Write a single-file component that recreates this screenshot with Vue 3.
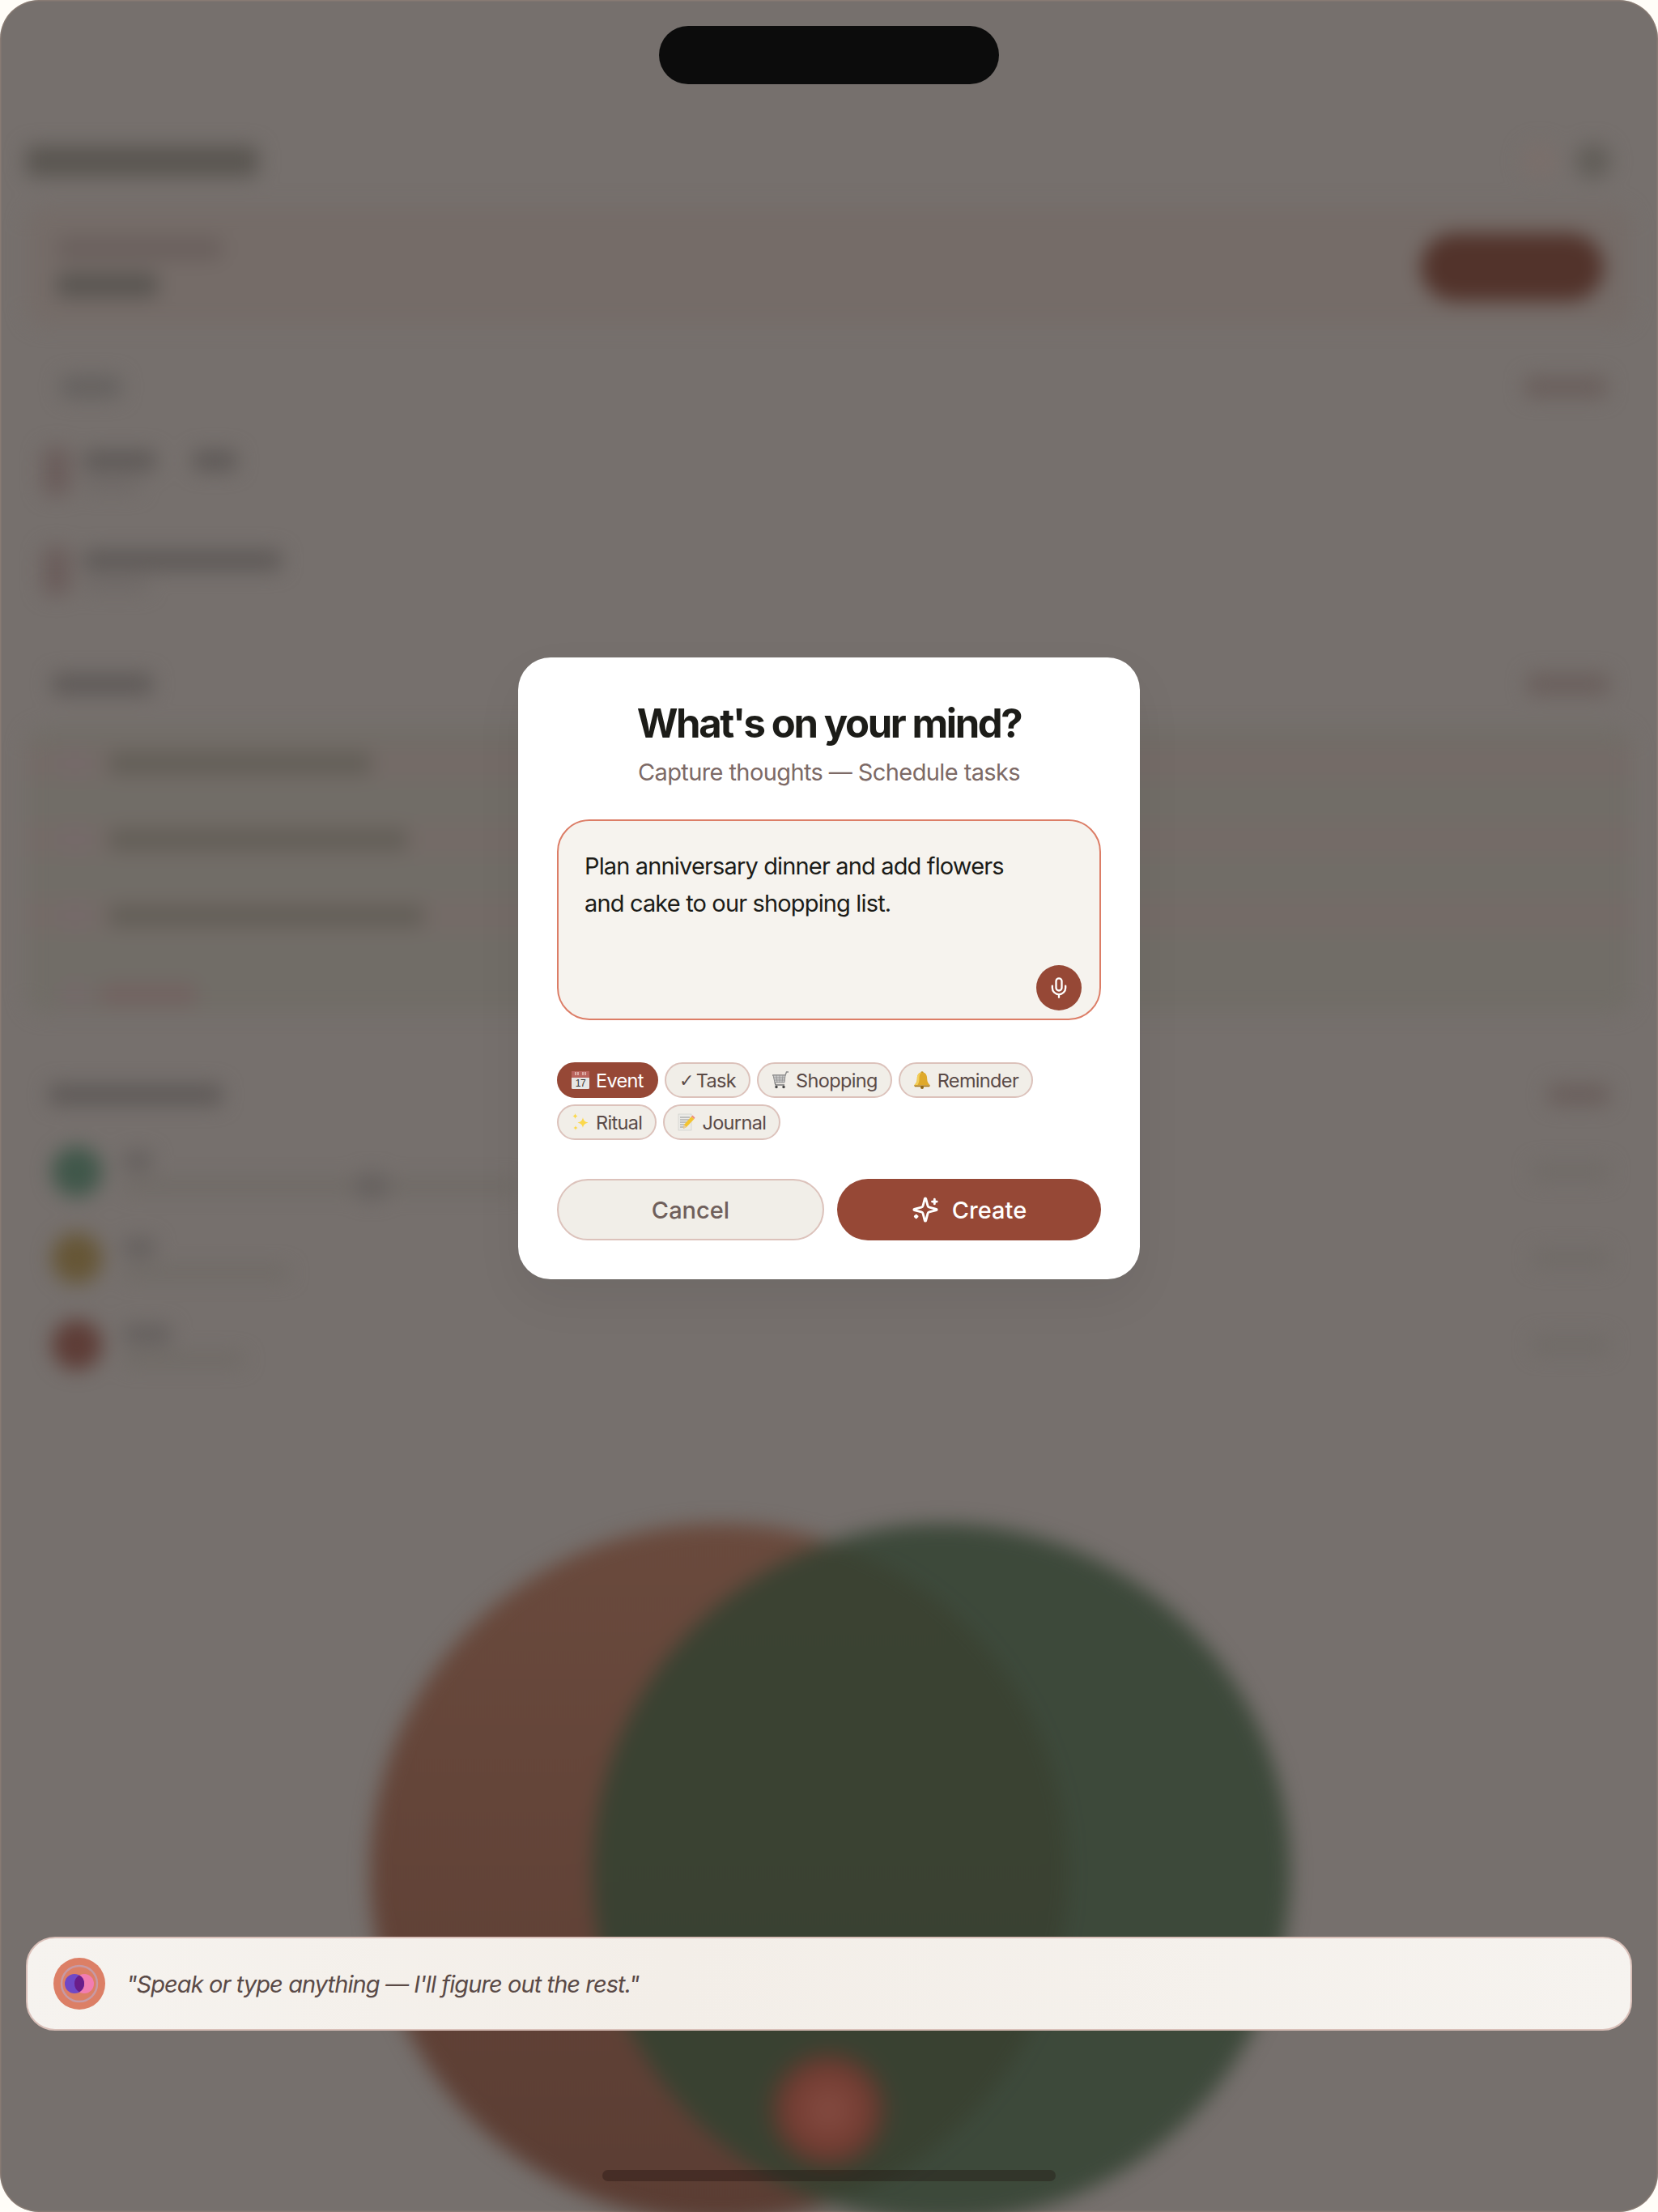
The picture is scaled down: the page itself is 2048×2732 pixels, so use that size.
<script setup>
const todayRows = [
  { title: 90, extra: 55, sub: 70 },
  { title: 245, extra: 0, sub: 80 }
]
const taskRows = [325, 370, 390]
const people = [
  { tone: 'green', name: 36, sub: 490, value: 95, knob: true },
  { tone: 'amber', name: 40, sub: 205, value: 95 },
  { tone: 'red', name: 60, sub: 150, value: 95 }
]
const chips = [
  { label: 'Event', icon: 'calendar', active: true },
  { label: 'Task', check: true },
  { label: 'Shopping', icon: 'cart' },
  { label: 'Reminder', icon: 'bell' },
  { label: 'Ritual', icon: 'sparkle' },
  { label: 'Journal', icon: 'memo' }
]
</script>

<template>
  <div class="frame">
    <div class="backdrop" aria-hidden="true">
      <div class="orb orb-orange"></div>
      <div class="orb orb-green"></div>
      <div class="orb orb-red"></div>

      <div class="app">
        <div class="head">
          <div class="bar bar-title"></div>
          <div class="head-icons">
            <span class="dot dot-faint"></span>
            <span class="dot"></span>
          </div>
        </div>

        <div class="hero">
          <div class="hero-text">
            <div class="bar bar-hero-label"></div>
            <div class="bar bar-hero-value"></div>
          </div>
          <div class="hero-pill"></div>
        </div>

        <div class="section-head today-head">
          <div class="bar bar-today"></div>
          <div class="bar bar-link bar-link-wide"></div>
        </div>
        <div class="today-list">
          <div v-for="(row, i) in todayRows" :key="i" class="today-row">
            <div class="marker"></div>
            <div class="today-text">
              <div class="today-title">
                <div class="bar bar-mid" :style="{ width: row.title + 'px' }"></div>
                <div v-if="row.extra" class="bar bar-mid" :style="{ width: row.extra + 'px' }"></div>
              </div>
              <div class="bar bar-faint" :style="{ width: row.sub + 'px' }"></div>
            </div>
          </div>
        </div>

        <div class="section-head tasks-head">
          <div class="bar bar-mid bar-heading-a"></div>
          <div class="bar bar-link bar-link-wide"></div>
        </div>
        <div class="tasks">
          <div v-for="(w, i) in taskRows" :key="i" class="task-row">
            <span class="task-check"></span>
            <div class="bar bar-task" :style="{ width: w + 'px' }"></div>
          </div>
          <div class="task-add">
            <span class="task-check"></span>
            <div class="bar bar-add"></div>
          </div>
        </div>

        <div class="section-head people-head">
          <div class="bar bar-mid bar-heading-b"></div>
          <div class="bar bar-link"></div>
        </div>
        <div class="people">
          <div v-for="(p, i) in people" :key="i" class="person">
            <span class="avatar" :class="p.tone"></span>
            <div class="person-text">
              <div class="bar bar-name" :style="{ width: p.name + 'px' }"></div>
              <div class="bar bar-sub" :style="{ width: p.sub + 'px' }">
                <span v-if="p.knob" class="knob"></span>
              </div>
            </div>
            <div class="bar bar-value" :style="{ width: p.value + 'px' }"></div>
          </div>
        </div>
      </div>
    </div>

    <div class="island"></div>

    <section class="modal">
      <h1 class="title">What's on your mind?</h1>
      <p class="subtitle">Capture thoughts — Schedule tasks</p>

      <div class="input">
        <p class="input-text">Plan anniversary dinner and add flowers<br>and cake to our shopping list.</p>
        <span class="mic">
          <svg viewBox="0 0 24 24" width="28" height="28" fill="none" stroke="#fff" stroke-width="2" stroke-linecap="round" stroke-linejoin="round">
            <path d="M12 2a3 3 0 0 0-3 3v7a3 3 0 0 0 6 0V5a3 3 0 0 0-3-3Z" />
            <path d="M19 10v2a7 7 0 0 1-14 0v-2" />
            <path d="M12 19v3" />
          </svg>
        </span>
      </div>

      <div class="chips">
        <span v-for="c in chips" :key="c.label" class="chip" :class="{ active: c.active, 'chip-check': c.check }">
          <span v-if="c.check" class="check">✓</span>
          <svg v-else-if="c.icon === 'calendar'" class="emoji" viewBox="0 0 22 22">
            <rect x="0" y="0" width="22" height="22" rx="1.5" fill="#e6e6e4" />
            <rect x="0" y="0" width="22" height="8" fill="#b9635c" />
            <path d="M5 1v4M8 1v4M14 1v4M17 1v4" stroke="#e8c9c4" stroke-width="1.4" />
            <text x="11" y="19" text-anchor="middle" class="cal-num">17</text>
          </svg>
          <svg v-else-if="c.icon === 'cart'" class="emoji" viewBox="0 0 22 22" fill="none">
            <path d="M1 5h16l1.5-4H21" stroke="#8b8b8b" stroke-width="1.4" />
            <path d="M2 5l2 9h12l1-9z" fill="#c9c9c9" stroke="#8e8e8e" stroke-width="1" />
            <path d="M6 5l1 9M10 5v9M14 5l-1 9M3 8h14M3.500 11h13" stroke="#8e8e8e" stroke-width=".7" />
            <path d="M4 14l1 3h11" stroke="#777" stroke-width="1.3" />
            <circle cx="6" cy="19.500" r="1.700" fill="#444" />
            <circle cx="15" cy="19.500" r="1.700" fill="#444" />
          </svg>
          <svg v-else-if="c.icon === 'bell'" class="emoji" viewBox="0 0 22 22">
            <circle cx="11" cy="2" r="1.800" fill="#b98a1e" />
            <path d="M11 1.500c-4.500 0-6.200 3.500-6.200 8 0 4-1.800 6-3.800 8h20c-2-2-3.800-4-3.800-8 0-4.500-1.700-8-6.200-8z" fill="#dfa92a" />
            <path d="M11 1.500c-3 1-3.500 4.500-3.500 8 0 4-1 6-2.500 8H1c2-2 3.800-4 3.800-8 0-4.500 1.700-8 6.200-8z" fill="#f3cf5a" />
            <path d="M1 17.500h20l-1 1.700H2z" fill="#a9791a" />
            <circle cx="11" cy="20" r="2" fill="#8f6614" />
          </svg>
          <svg v-else-if="c.icon === 'sparkle'" class="emoji" viewBox="0 0 22 22" fill="#fbd84b">
            <path d="M14 5c.7 4 2.500 5.500 6.500 6.500-4 1-5.800 2.500-6.500 6.500-.7-4-2.500-5.500-6.500-6.500 4-1 5.800-2.500 6.500-6.500z" />
            <path d="M4.500 0c.3 2 1.200 3 3 3.500-1.800.5-2.700 1.500-3 3.500-.3-2-1.200-3-3-3.500 1.800-.5 2.700-1.500 3-3.500z" />
            <path d="M5 15c.3 1.800 1 2.600 2.600 3-1.600.4-2.300 1.200-2.600 3-.3-1.800-1-2.600-2.600-3 1.600-.4 2.300-1.200 2.600-3z" />
          </svg>
          <svg v-else-if="c.icon === 'memo'" class="emoji" viewBox="0 0 22 22">
            <rect x="1" y="1" width="16" height="20" fill="#ecebe7" stroke="#c9c9c5" stroke-width=".6" />
            <path d="M3 5h12M3 8h12M3 11h9M3 14h6M3 17h5" stroke="#8a8a8a" stroke-width=".9" />
            <path d="M7 19l1-5L17 4l3.500 3-9.500 10z" fill="#f4c430" />
            <path d="M17 4l1.500-1.500 3 3L20.500 7z" fill="#ef8a7c" />
            <path d="M7 19l1-5 3 3z" fill="#e7c9a0" />
          </svg>
          {{ c.label }}
        </span>
      </div>

      <div class="actions">
        <button class="btn btn-cancel">Cancel</button>
        <button class="btn btn-create">
          <svg viewBox="0 0 24 24" width="34" height="34" fill="none" stroke="#fff" stroke-width="2" stroke-linecap="round" stroke-linejoin="round">
            <path d="M9.937 15.500A2 2 0 0 0 8.500 14.063l-6.135-1.582a.5.500 0 0 1 0-.962L8.500 9.936A2 2 0 0 0 9.937 8.500l1.582-6.135a.5.500 0 0 1 .963 0L14.063 8.500A2 2 0 0 0 15.500 9.937l6.135 1.581a.5.500 0 0 1 0 .964L15.500 14.063a2 2 0 0 0-1.437 1.437l-1.582 6.135a.5.500 0 0 1-.963 0z" />
            <path d="M20 3v4M22 5h-4M4 17v2M5 18H3" />
          </svg>
          Create
        </button>
      </div>
    </section>

    <div class="prompt">
      <span class="orb-logo">
        <svg viewBox="0 0 64 64" width="64" height="64">
          <circle cx="32" cy="32" r="32" fill="#dc7f66" />
          <circle cx="32" cy="32" r="22" fill="none" stroke="#c79aa5" stroke-width="2.500" />
          <circle cx="38" cy="32" r="12" fill="#f27db2" />
          <circle cx="26" cy="32" r="12" fill="#7048c6" />
          <path d="M32 21.600a12 12 0 0 1 0 20.800a12 12 0 0 1 0-20.800z" fill="#6a1d8a" />
        </svg>
      </span>
      <p class="prompt-text">"Speak or type anything — I'll figure out the rest."</p>
    </div>

    <div class="home"></div>
  </div>
</template>

<style scoped>
.frame {
  position: relative;
  width: 2048px;
  height: 2732px;
  border-radius: 48px;
  overflow: hidden;
  background: #76706d;
  box-shadow: inset 0 0 0 1.500px rgba(165, 140, 125, .4);
  font-family: "Inter", "Liberation Sans", sans-serif;
}

/* ---------- blurred layer behind the dialog ---------- */
.backdrop {
  position: absolute;
  inset: 0;
  filter: blur(12px);
}
.orb {
  position: absolute;
  border-radius: 50%;
}
.orb-orange {
  left: 457px;
  top: 1882px;
  width: 862px;
  height: 862px;
  background: linear-gradient(180deg, #6a4a3d 0%, #5b3d33 100%);
}
.orb-green {
  left: 732px;
  top: 1882px;
  width: 862px;
  height: 862px;
  background: rgba(50, 66, 49, .84);
}
.orb-red {
  left: 945px;
  top: 2528px;
  width: 156px;
  height: 156px;
  background: radial-gradient(circle, #854c42 0%, #733c32 45%, rgba(100, 56, 45, .55) 62%, rgba(90, 60, 45, 0) 72%);
}
.app {
  position: relative;
  padding: 169px 32px 0;
  display: flex;
  flex-direction: column;
}
.bar {
  border-radius: 8px;
  flex: none;
}
.head {
  height: 60px;
  display: flex;
  align-items: center;
  justify-content: space-between;
}
.bar-title {
  width: 287px;
  height: 38px;
  background: #5a5651;
}
.head-icons {
  display: flex;
  align-items: center;
  gap: 22px;
  padding-right: 26px;
}
.dot {
  width: 44px;
  height: 44px;
  border-radius: 50%;
  background: #625e59;
}
.dot-faint {
  background: #7a6f6b;
}
.hero {
  height: 145px;
  margin-top: 26px;
  padding: 2px 35px 0 38px;
  border-radius: 24px;
  display: flex;
  align-items: center;
  justify-content: space-between;
  background: #756c68;
}
.hero-text {
  display: flex;
  flex-direction: column;
  gap: 16px;
}
.bar-hero-label {
  width: 205px;
  height: 28px;
  background: #6a605d;
}
.bar-hero-value {
  width: 125px;
  height: 30px;
  background: #595551;
}
.hero-pill {
  width: 226px;
  height: 84px;
  border-radius: 42px;
  background: #52332b;
}
.section-head {
  height: 40px;
  display: flex;
  align-items: center;
  justify-content: space-between;
  padding: 0 28px 0 32px;
}
.today-head {
  margin-top: 56px;
  padding-left: 43px;
  padding-right: 31px;
}
.bar-today {
  width: 75px;
  height: 28px;
  background: #666260;
}
.bar-link {
  width: 76px;
  height: 26px;
  background: #6a5f5c;
}
.bar-link-wide {
  width: 102px;
}
.today-list {
  margin-top: 54px;
  display: flex;
  flex-direction: column;
  gap: 63px;
  padding-left: 20px;
}
.today-row {
  height: 60px;
  display: flex;
  align-items: stretch;
  gap: 15px;
}
.marker {
  width: 36px;
  border-radius: 10px;
  background: #6b5e5c;
}
.today-text {
  display: flex;
  flex-direction: column;
  gap: 10px;
  padding-top: 4px;
}
.today-title {
  display: flex;
  gap: 45px;
}
.bar-mid {
  height: 26px;
  background: #5f5a58;
}
.bar-faint {
  height: 16px;
  background: #6e6866;
}
.tasks-head {
  margin-top: 90px;
  padding-left: 32px;
}
.bar-heading-a {
  width: 125px;
}
.tasks {
  margin-top: 35px;
  padding: 21px 0;
  border-radius: 24px;
  display: flex;
  flex-direction: column;
  gap: 50px;
  background: #716d67;
}
.task-row {
  height: 44px;
  padding-left: 46px;
  display: flex;
  align-items: center;
  gap: 26px;
  background: #746b67;
}
.task-check {
  width: 30px;
  height: 30px;
  border-radius: 8px;
  background: #75696a;
  flex: none;
}
.bar-task {
  height: 26px;
  background: #625e57;
}
.task-add {
  position: relative;
  display: flex;
  align-items: center;
  gap: 15px;
  height: 44px;
  margin-top: 3px;
  padding-left: 46px;
  margin-bottom: -20px;
}
.bar-add {
  width: 120px;
  height: 28px;
  background: #726361;
}
.people-head {
  margin-top: 81px;
  padding-left: 28px;
}
.bar-heading-b {
  width: 215px;
}
.people {
  margin-top: 45px;
  display: flex;
  flex-direction: column;
  gap: 47px;
  padding: 0 28px 0 32px;
}
.person {
  height: 60px;
  display: flex;
  align-items: center;
  gap: 26px;
}
.avatar {
  width: 62px;
  height: 62px;
  border-radius: 50%;
  flex: none;
}
.green { background: #40574a; }
.amber { background: #665636; }
.red { background: #5e3d37; }
.person-text {
  flex: 1;
  display: flex;
  flex-direction: column;
  gap: 12px;
}
.bar-name {
  height: 24px;
  background: #65605e;
}
.bar-sub {
  position: relative;
  height: 14px;
  background: #6e6964;
}
.knob {
  position: absolute;
  left: 285px;
  top: -9px;
  width: 44px;
  height: 32px;
  border-radius: 16px;
  background: #66615f;
}
.bar-value {
  height: 22px;
  background: #706b67;
}

/* ---------- crisp layers ---------- */
.island {
  position: absolute;
  left: 814px;
  top: 32px;
  width: 420px;
  height: 72px;
  border-radius: 36px;
  background: #0c0c0c;
}
.home {
  position: absolute;
  left: 744px;
  top: 2680px;
  width: 560px;
  height: 14px;
  border-radius: 7px;
  background: rgba(30, 16, 12, .34);
}
.modal {
  position: absolute;
  left: 640px;
  top: 812px;
  width: 768px;
  box-sizing: border-box;
  padding: 52px 48px 48px;
  border-radius: 40px;
  background: #fff;
  box-shadow: 0 24px 60px rgba(0, 0, 0, .06);
  display: flex;
  flex-direction: column;
}
.title {
  margin: 0;
  height: 60px;
  line-height: 60px;
  font-size: 49px;
  font-weight: 700;
  letter-spacing: -2.400px;
  color: #1c1c18;
  text-align: center;
  white-space: nowrap;
}
.subtitle {
  margin: 12px 0 0;
  height: 36px;
  line-height: 36px;
  font-size: 29px;
  font-weight: 400;
  letter-spacing: -.6px;
  color: #7d6a66;
  text-align: center;
  white-space: nowrap;
}
.input {
  position: relative;
  margin-top: 40px;
  height: 248px;
  box-sizing: border-box;
  padding: 33px 32px 0;
  border: 2px solid #dc7d66;
  border-radius: 40px;
  background: #f6f3ee;
}
.input-text {
  margin: 0;
  font-size: 29px;
  line-height: 46px;
  letter-spacing: -.85px;
  color: #1c1c18;
  white-space: nowrap;
}
.mic {
  position: absolute;
  right: 22px;
  bottom: 10px;
  width: 56px;
  height: 56px;
  border-radius: 50%;
  background: #964836;
  display: flex;
  align-items: center;
  justify-content: center;
}
.chips {
  margin-top: 52px;
  display: flex;
  flex-wrap: wrap;
  gap: 8px;
}
.chip {
  height: 44px;
  box-sizing: border-box;
  padding: 0 16px;
  border: 2px solid #dcc2bb;
  border-radius: 22px;
  background: #f1eee8;
  display: inline-flex;
  align-items: center;
  gap: 8px;
  font-size: 23.500px;
  letter-spacing: -.65px;
  color: #5a4a47;
}
.chip.active {
  border-color: #964836;
  background: #964836;
  color: #fff;
}
.chip-check {
  gap: 3px;
}
.check {
  font-family: "DejaVu Sans", sans-serif;
  font-size: 22px;
}
.emoji {
  width: 22px;
  height: 22px;
  flex: none;
}
.cal-num {
  font-family: "Liberation Sans", sans-serif;
  font-size: 12px;
  fill: #333;
  letter-spacing: -.5px;
}
.actions {
  margin-top: 48px;
  display: grid;
  grid-template-columns: 330fr 326fr;
  gap: 16px;
}
.btn {
  height: 76px;
  box-sizing: border-box;
  border-radius: 38px;
  font-family: inherit;
  font-size: 29px;
  font-weight: 500;
  display: flex;
  align-items: center;
  justify-content: center;
  cursor: pointer;
}
.btn-cancel {
  border: 2px solid #dcc2bb;
  background: #f1eee8;
  color: #6f5f5b;
}
.btn-create {
  border: 0;
  background: #964836;
  color: #fff;
  gap: 16px;
}
.prompt {
  position: absolute;
  left: 32px;
  top: 2392px;
  width: 1984px;
  height: 116px;
  box-sizing: border-box;
  padding-left: 32px;
  border: 2px solid #d9bfb8;
  border-radius: 36px;
  background: linear-gradient(100deg, #f6f3ef 0%, #f3eee8 40%, #f6f3ef 100%);
  display: flex;
  align-items: center;
  gap: 26px;
}
.orb-logo {
  width: 64px;
  height: 64px;
  flex: none;
}
.orb-logo svg {
  display: block;
}
.prompt-text {
  margin: 0;
  font-size: 29px;
  font-style: italic;
  letter-spacing: -.92px;
  color: #5a4a47;
  white-space: nowrap;
}
</style>

<style>
html, body {
  margin: 0;
  background: #fffdf8;
}
</style>
